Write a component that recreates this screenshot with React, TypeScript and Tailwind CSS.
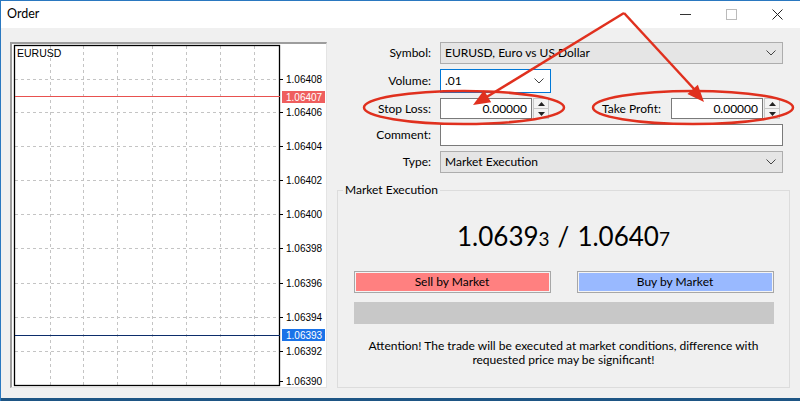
import React from "react";

const hLines = [35, 68, 102, 136, 170, 204, 239, 273, 307];
const vLines = [38, 71, 105, 140, 174, 208, 242];
const labels: [number, string][] = [
  [35, "1.06408"],
  [68, "1.06406"],
  [102, "1.06404"],
  [136, "1.06402"],
  [170, "1.06400"],
  [204, "1.06398"],
  [239, "1.06396"],
  [273, "1.06394"],
  [307, "1.06392"],
  [337, "1.06390"],
];

const Chart = () => (
  <svg width="314" height="343" viewBox="0 0 314 343" className="block">
    <rect x="0" y="0" width="314" height="343" fill="#fff" />
    {hLines.map((y) => (
      <line key={"h" + y} x1="3" x2="267" y1={y + 0.5} y2={y + 0.5} stroke="#c4c4c4" strokeDasharray="3 3" />
    ))}
    {vLines.map((x) => (
      <line key={"v" + x} x1={x + 0.5} x2={x + 0.5} y1="2" y2="341" stroke="#c4c4c4" strokeDasharray="3 3" />
    ))}
    <rect x="2.5" y="1.5" width="265" height="340" fill="none" stroke="#000" strokeWidth="1.3" />
    <line x1="3" x2="268" y1="52.5" y2="52.5" stroke="#e8514f" />
    <line x1="3" x2="268" y1="291.5" y2="291.5" stroke="#0c2d6b" strokeWidth="1.2" />
    {labels.map(([y, t]) => (
      <g key={t}>
        <line x1="268" x2="271" y1={y + 0.5} y2={y + 0.5} stroke="#000" />
        <text x="274" y={y + 4} fontSize="10" fontFamily="Liberation Sans, sans-serif" fill="#000">{t}</text>
      </g>
    ))}
    <rect x="270" y="47" width="43" height="12" fill="#ef5e5e" />
    <text x="274" y="56.5" fontSize="10" fontFamily="Liberation Sans, sans-serif" fill="#fff">1.06407</text>
    <rect x="270" y="285" width="43" height="12" fill="#1a73e8" />
    <text x="274" y="294.5" fontSize="10" fontFamily="Liberation Sans, sans-serif" fill="#fff">1.06393</text>
    <text x="5" y="13" fontSize="10.5" fontFamily="Liberation Sans, sans-serif" fill="#000">EURUSD</text>
  </svg>
);

const Chevron = () => (
  <svg width="10" height="6" viewBox="0 0 10 6">
    <polyline points="0.5,0.5 5,5 9.5,0.5" fill="none" stroke="#444" strokeWidth="1" />
  </svg>
);

const Spin = () => (
  <div className="w-[16px] h-[21px] border border-[#c6c6c6] bg-[#f3f3f3] flex flex-col">
    <div className="flex-1 flex items-center justify-center border-b border-[#c6c6c6]">
      <svg width="7" height="4"><polygon points="0,4 3.5,0 7,4" fill="#222" /></svg>
    </div>
    <div className="flex-1 flex items-center justify-center">
      <svg width="7" height="4"><polygon points="0,0 7,0 3.5,4" fill="#222" /></svg>
    </div>
  </div>
);

function arrowHead(ax: number, ay: number, bx: number, by: number) {
  const dx = bx - ax;
  const dy = by - ay;
  const l = Math.hypot(dx, dy);
  const ux = dx / l;
  const uy = dy / l;
  const cx = bx - 17 * ux;
  const cy = by - 17 * uy;
  const px = -uy * 7;
  const py = ux * 7;
  return `${bx},${by} ${cx + px},${cy + py} ${cx - px},${cy - py}`;
}

const Annotations = () => (
  <svg className="absolute top-0 left-0 pointer-events-none" width="800" height="401" viewBox="0 0 800 401">
    <g stroke="#e0301e" strokeWidth="2.5" fill="none">
      <ellipse cx="463" cy="106.5" rx="100" ry="16.5" />
      <ellipse cx="692" cy="106.5" rx="100" ry="16.5" />
      <line x1="623" y1="12" x2="484" y2="97" />
      <line x1="623" y1="12" x2="694" y2="89" />
    </g>
    <polygon points={arrowHead(623, 12, 472, 104)} fill="#e0301e" />
    <polygon points={arrowHead(623, 12, 703, 101)} fill="#e0301e" />
  </svg>
);

const Label = ({ children, w = "w-[95px]" }: { children: React.ReactNode; w?: string }) => (
  <div className={`${w} text-right pr-[1px] shrink-0`}>{children}</div>
);

export default function App() {
  return (
    <div className="relative w-[800px] h-[401px] overflow-hidden flex flex-col border-l border-t border-[#2a78c0] font-['Lato','Liberation_Sans',sans-serif] text-[12px] text-black">
      {/* title bar */}
      <div className="h-[27px] bg-white flex items-center shrink-0">
        <div className="pl-[6px] text-[12.5px]">Order</div>
        <div className="ml-auto flex items-center h-full">
          <div className="w-[46px] h-full flex items-center justify-center">
            <div className="w-[11px] h-px bg-[#333]" />
          </div>
          <div className="w-[46px] h-full flex items-center justify-center">
            <div className="w-[11px] h-[11px] border border-[#bbb]" />
          </div>
          <div className="w-[46px] h-full flex items-center justify-center">
            <svg width="11" height="11" viewBox="0 0 11 11">
              <path d="M0.5 0.5 L10.5 10.5 M10.5 0.5 L0.5 10.5" stroke="#222" strokeWidth="1" />
            </svg>
          </div>
        </div>
      </div>

      {/* body */}
      <div className="flex-1 bg-[#f0f0f0] flex pt-[14px] pl-[9px] border-b-[3px] border-[#1e5584]">
        <div className="w-[317px] h-[346px] border-t-2 border-l-2 border-[#9d9d9d] border-r border-b border-r-[#e4e4e4] border-b-[#e4e4e4] bg-white shrink-0">
          <Chart />
        </div>

        <div className="ml-[10px] w-[453px] flex flex-col">
          <div className="flex flex-col gap-[5px]">
            <div className="flex items-center h-[22px]">
              <Label>Symbol:</Label>
              <div className="ml-[8px] w-[343px] h-[22px] bg-[#e5e5e5] border border-[#adadad] flex items-center pl-[4px] pr-[6px]">
                <span>EURUSD, Euro vs US Dollar</span>
                <span className="ml-auto"><Chevron /></span>
              </div>
            </div>
            <div className="flex items-center h-[24px]">
              <Label>Volume:</Label>
              <div className="ml-[8px] w-[111px] h-[24px] bg-white border border-[#0078d7] flex items-center pl-[4px] pr-[6px]">
                <span>.01</span>
                <span className="ml-auto"><Chevron /></span>
              </div>
            </div>
            <div className="flex items-center h-[21px]">
              <Label>Stop Loss:</Label>
              <div className="ml-[8px] w-[92px] h-[21px] bg-white border border-[#7a7a7a] flex items-center justify-end pr-[4px]">0.00000</div>
              <div className="ml-[1px]"><Spin /></div>
              <Label w="w-[113px]">Take Profit:</Label>
              <div className="ml-[9px] w-[92px] h-[21px] bg-white border border-[#7a7a7a] flex items-center justify-end pr-[4px]">0.00000</div>
              <div className="ml-[1px]"><Spin /></div>
            </div>
            <div className="flex items-center h-[22px]">
              <Label>Comment:</Label>
              <div className="ml-[8px] w-[343px] h-[22px] bg-white border border-[#7a7a7a]" />
            </div>
            <div className="flex items-center h-[22px]">
              <Label>Type:</Label>
              <div className="ml-[8px] w-[343px] h-[22px] bg-[#e5e5e5] border border-[#adadad] flex items-center pl-[4px] pr-[6px]">
                <span>Market Execution</span>
                <span className="ml-auto"><Chevron /></span>
              </div>
            </div>
          </div>

          {/* group box */}
          <div className="relative mt-[17px] h-[198px] border border-[#dcdcdc] flex flex-col items-center pt-[29px]">
            <div className="absolute -top-[9px] left-[5px] px-[2px] bg-[#f0f0f0] leading-[16px]">Market Execution</div>
            <div className="h-[32px] flex items-baseline text-[26px] leading-[32px]">
              <span>1.0639</span>
              <span className="text-[19px]">3</span>
              <span className="mx-[8px]">/</span>
              <span>1.0640</span>
              <span className="text-[19px]">7</span>
            </div>
            <div className="mt-[19px] w-[420px] flex justify-between">
              <div className="w-[197px] h-[22px] border border-[#a7a7a7] p-px bg-[#f4f4f4]">
                <div className="h-full bg-[#ff8080] flex items-center justify-center">Sell by Market</div>
              </div>
              <div className="w-[197px] h-[22px] border border-[#a7a7a7] p-px bg-[#f4f4f4]">
                <div className="h-full bg-[#99b9ff] flex items-center justify-center">Buy by Market</div>
              </div>
            </div>
            <div className="mt-[9px] w-[420px] h-[22px] bg-[#c8c8c8]" />
            <div className="mt-[15px] text-center leading-[14px]">
              Attention! The trade will be executed at market conditions, difference with
              <br />
              requested price may be significant!
            </div>
          </div>
        </div>
      </div>

      <Annotations />
    </div>
  );
}
